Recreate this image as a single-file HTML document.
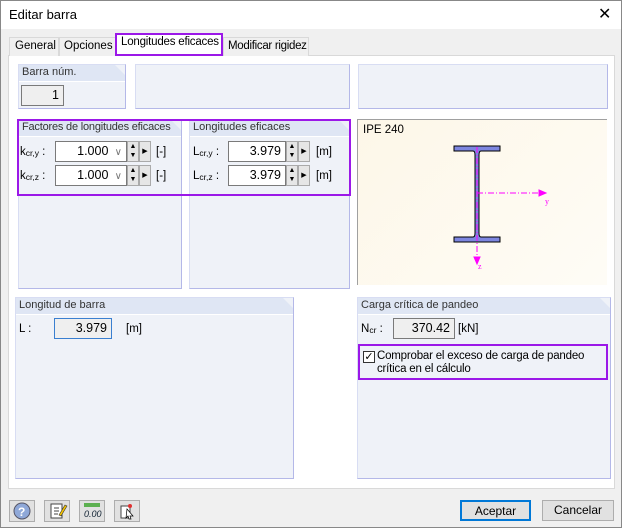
<!DOCTYPE html>
<html><head><meta charset="utf-8"><style>
*{box-sizing:border-box;margin:0;padding:0}
body{width:622px;height:528px;overflow:hidden;background:#f0f0f0;font-family:"Liberation Sans",sans-serif;font-size:11.5px;color:#000;position:relative;border:1px solid #888;white-space:nowrap}
.a{position:absolute}
.grp{position:absolute;background:#eff2f8;border:1px solid #b4b8e8;border-top-color:#d8ddf3;border-left-color:#d8ddf3}
.hd{position:absolute;left:0;top:0;right:0;height:17px;background:#dfe6f4;border-bottom:1px solid #fff;padding:1px 0 0 3px;color:#333;font-size:11px;clip-path:polygon(0 0,calc(100% - 10px) 0,100% 10px,100% 100%,0 100%)}
.inp{position:absolute;height:21px;background:#fff;border:1px solid #7a7a7a;text-align:right;padding:2px 4px;font-size:12.5px}
.ro{background:#efefef}
.spin{position:absolute;width:12px;height:21px;background:#e6e6e6;border:1px solid #aaa;font-size:7px;line-height:9px;text-align:center}
.btn{position:absolute;height:21px;background:#e1e1e1;border:1px solid #adadad;text-align:center;line-height:19px;font-size:12px}
.ib{position:absolute;top:499px;width:26px;height:22px;background:#e1e1e1;border:1px solid #adadad}
.hl{position:absolute;border:2px solid #9b18e8}
sub{font-size:8.5px;vertical-align:-1px;line-height:0}
</style></head><body>
<div class="a" style="left:0;top:0;width:620px;height:28px;background:#fff"></div>
<div class="a" style="left:8px;top:6px;font-size:13px">Editar barra</div>
<div class="a" style="left:597px;top:3px;font-size:16px;font-family:'DejaVu Sans',sans-serif;font-weight:200">✕</div>
<!-- tabs -->
<div class="a" style="left:7px;top:54px;width:607px;height:434px;background:#fff;border:1px solid #d9d9d9"></div>
<div class="a" style="left:8px;top:36px;width:50px;height:19px;border:1px solid #d9d9d9;border-bottom:none;background:#f0f0f0;padding:2px 0 0 5px">General</div>
<div class="a" style="left:58px;top:36px;width:57px;height:19px;border:1px solid #d9d9d9;border-bottom:none;background:#f0f0f0;padding:2px 0 0 4px">Opciones</div>
<div class="a" style="left:115px;top:33px;width:107px;height:22px;background:#fff;padding:2px 0 0 5px;letter-spacing:-0.2px">Longitudes eficaces</div>
<div class="a" style="left:222px;top:36px;width:86px;height:19px;border:1px solid #d9d9d9;border-bottom:none;background:#f0f0f0;padding:2px 0 0 4px;letter-spacing:-0.3px">Modificar rigidez</div>
<div class="hl" style="left:114px;top:32px;width:108px;height:23px"></div>

<div class="grp" style="left:17px;top:63px;width:108px;height:45px"><div class="hd">Barra núm.</div>
<div class="inp ro" style="left:2px;top:20px;width:43px">1</div></div>
<div class="grp" style="left:134px;top:63px;width:215px;height:45px"></div>
<div class="grp" style="left:357px;top:63px;width:250px;height:45px"></div>

<div class="grp" style="left:17px;top:118px;width:164px;height:170px"><div class="hd" style="letter-spacing:-0.2px">Factores de longitudes eficaces</div>
<div class="a" style="left:1px;top:26px">k<sub>cr,y</sub> :</div>
<div class="inp" style="left:36px;top:21px;width:72px">1.000 <span style="color:#777;font-size:10px">&nbsp;∨</span></div>
<div class="spin" style="left:108px;top:21px">▲<br>▼</div><div class="spin" style="left:120px;top:21px;line-height:19px">▶</div>
<div class="a" style="left:137px;top:26px">[-]</div>
<div class="a" style="left:1px;top:50px">k<sub>cr,z</sub> :</div>
<div class="inp" style="left:36px;top:45px;width:72px">1.000 <span style="color:#777;font-size:10px">&nbsp;∨</span></div>
<div class="spin" style="left:108px;top:45px">▲<br>▼</div><div class="spin" style="left:120px;top:45px;line-height:19px">▶</div>
<div class="a" style="left:137px;top:50px">[-]</div></div>

<div class="grp" style="left:188px;top:118px;width:161px;height:170px"><div class="hd">Longitudes eficaces</div>
<div class="a" style="left:3px;top:26px">L<sub>cr,y</sub> :</div>
<div class="inp" style="left:38px;top:21px;width:58px">3.979</div>
<div class="spin" style="left:96px;top:21px">▲<br>▼</div><div class="spin" style="left:108px;top:21px;line-height:19px">▶</div>
<div class="a" style="left:126px;top:26px">[m]</div>
<div class="a" style="left:3px;top:50px">L<sub>cr,z</sub> :</div>
<div class="inp" style="left:38px;top:45px;width:58px">3.979</div>
<div class="spin" style="left:96px;top:45px">▲<br>▼</div><div class="spin" style="left:108px;top:45px;line-height:19px">▶</div>
<div class="a" style="left:126px;top:50px">[m]</div></div>
<div class="hl" style="left:16px;top:118px;width:334px;height:77px"></div>

<div class="a" style="left:356px;top:118px;width:250px;height:166px;background:linear-gradient(135deg,#fdf7e8,#fefcf6);border-left:1px solid #a0a0a0;border-top:1px solid #a0a0a0"></div>
<div class="a" style="left:362px;top:123px">IPE 240</div>
<svg class="a" style="left:356px;top:118px" width="250" height="166">
<g fill="#7d86e0" stroke="#000" stroke-width="1">
<path d="M97 27H143V32H124Q122 32 122 36V114Q122 118 124 118H143V123H97V118H116Q118 118 118 114V36Q118 32 116 32H97Z"/></g>
<g stroke="#ff00ff" stroke-width="1" fill="#ff00ff">
<path d="M120 74H182" stroke-dasharray="6,2,1,2"/><path d="M182 71L189 74L182 77Z"/>
<path d="M120 28V142" stroke-dasharray="6,2,1,2" stroke="#ff00ff"/><path d="M117 138L120 145L123 138Z"/>
</g>
<text x="188" y="85" fill="#ff00ff" font-size="8" font-family="Liberation Serif">y</text>
<text x="121" y="150" fill="#ff00ff" font-size="8" font-family="Liberation Serif">z</text>
</svg>

<div class="grp" style="left:14px;top:296px;width:279px;height:182px"><div class="hd">Longitud de barra</div>
<div class="a" style="left:3px;top:25px">L :</div>
<div class="inp ro" style="left:38px;top:20px;width:58px;border-color:#3a7fd0">3.979</div>
<div class="a" style="left:110px;top:25px">[m]</div></div>

<div class="grp" style="left:356px;top:296px;width:254px;height:182px"><div class="hd">Carga crítica de pandeo</div>
<div class="a" style="left:3px;top:25px">N<sub>cr</sub> :</div>
<div class="inp ro" style="left:35px;top:20px;width:62px">370.42</div>
<div class="a" style="left:100px;top:25px">[kN]</div>
<div class="a" style="left:5px;top:53px;width:12px;height:12px;border:1px solid #333;background:#fff;font-size:11px;line-height:10px;text-align:center">✓</div>
<div class="a" style="left:19px;top:52px;line-height:13px;letter-spacing:-0.2px">Comprobar el exceso de carga de pandeo<br>crítica en el cálculo</div></div>
<div class="hl" style="left:357px;top:343px;width:250px;height:36px"></div>

<div class="ib" style="left:8px"><svg width="24" height="20"><circle cx="12" cy="10" r="8" fill="#8fa8d8" stroke="#556"/><text x="8" y="15" font-size="12" font-weight="bold" fill="#fff">?</text></svg></div>
<div class="ib" style="left:43px"><svg width="24" height="20"><rect x="6" y="3" width="11" height="14" fill="#fff" stroke="#444"/><path d="M9 7h5M9 10h5M9 13h4" stroke="#444"/><path d="M14 14l6-10 2 1-6 10z" fill="#f5c400" stroke="#333" stroke-width=".6"/></svg></div>
<div class="ib" style="left:78px"><svg width="24" height="20"><rect x="4" y="2" width="16" height="4" fill="#5cb050"/><text x="4" y="16" font-size="9" font-style="italic" fill="#123">0.00</text></svg></div>
<div class="ib" style="left:113px"><svg width="24" height="20"><rect x="6" y="5" width="9" height="12" fill="#fff" stroke="#444"/><path d="M12 8l6 7-3 0 1 3-2 0-1-3-2 2z" fill="#fff" stroke="#000" stroke-width=".7"/><circle cx="15" cy="5" r="2" fill="#e03030"/></svg></div>

<div class="btn" style="left:459px;top:499px;width:71px;border:2px solid #0078d7">Aceptar</div>
<div class="btn" style="left:541px;top:499px;width:72px">Cancelar</div>
</body></html>
